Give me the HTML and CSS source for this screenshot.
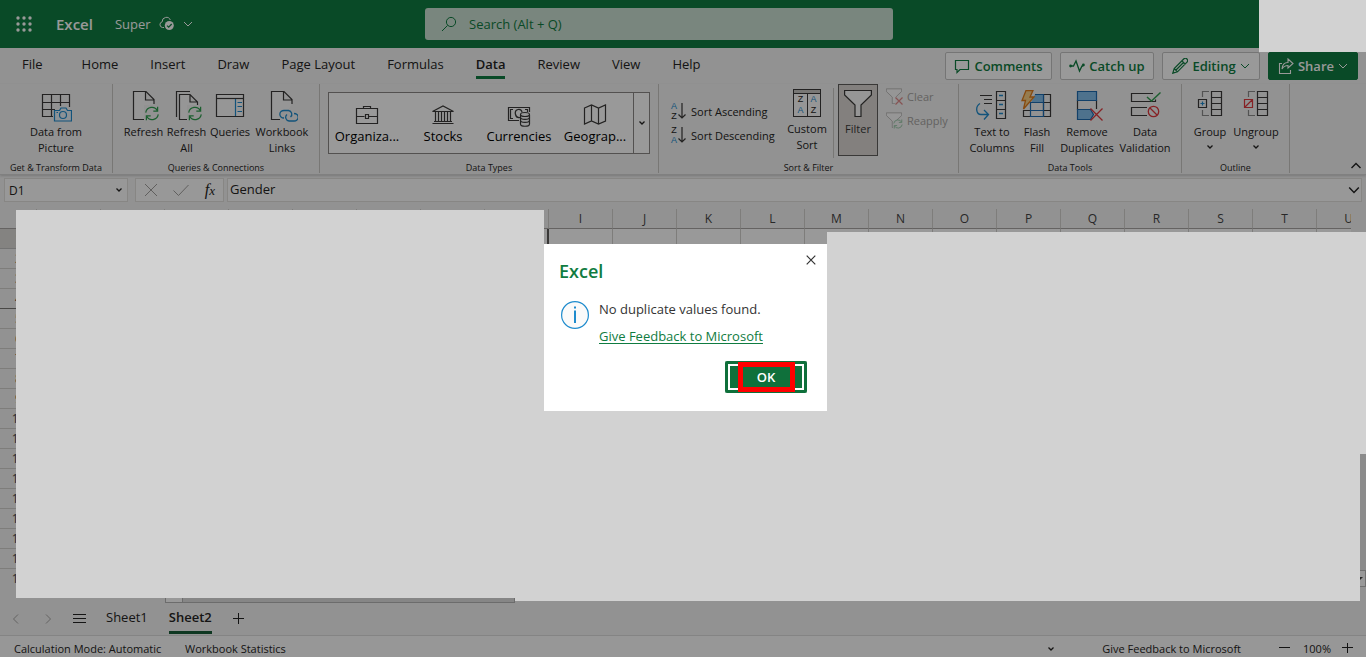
FILE: index.html
```html
<!DOCTYPE html>
<html lang="en">
<head>
<meta charset="utf-8">
<title>Super - Excel</title>
<link rel="stylesheet" href="styles.css">
</head>
<body>
<svg class="defs" aria-hidden="true">
  <symbol id="chev" viewBox="0 0 10 10"><path d="M1 3l4 4 4-4" fill="none" stroke="currentColor"/></symbol>
  <symbol id="chev-small" viewBox="0 0 10 10"><path d="M2.500 3.500l2.500 2.500 2.500-2.500" fill="none" stroke="currentColor" stroke-width="1.300"/></symbol>
  <symbol id="page" viewBox="0 0 32 32"><path d="M16 29.500H5.500v-28H18l8 8V14M17.500 1.500v8.500H26" fill="#fafafa" stroke="#3b3a39" stroke-width="1.200"/></symbol>
  <symbol id="cycle" viewBox="0 0 16 16"><path d="M1.300 7a6.700 6.700 0 0 1 12.500-2M14 .8v4.700H9.400M14.700 9a6.700 6.700 0 0 1-12.500 2M2 15.200v-4.700h4.600" fill="none" stroke="currentColor" stroke-width="1.300"/></symbol>
  <symbol id="funnel" viewBox="0 0 28 28"><path d="M.6 1.500h26.800v4.500L17 16v11.500h-6V16L.6 6z" fill="#fafafa" stroke="currentColor" stroke-width="1.200"/></symbol>
  <symbol id="arrow-down" viewBox="0 0 8 16"><path d="M4 0v15M.5 11.500L4 15l3.500-3.500" fill="none" stroke="#3b3a39" stroke-width="1.200"/></symbol>
</svg>

<div class="app">
  <header class="topbar">
    <div class="brand">
      <button class="plain waffle" aria-label="App launcher">
        <svg width="16" height="16" viewBox="0 0 16 16" fill="#fff"><circle cx="2" cy="2" r="1.700"/><circle cx="8" cy="2" r="1.700"/><circle cx="14" cy="2" r="1.700"/><circle cx="2" cy="8" r="1.700"/><circle cx="8" cy="8" r="1.700"/><circle cx="14" cy="8" r="1.700"/><circle cx="2" cy="14" r="1.700"/><circle cx="8" cy="14" r="1.700"/><circle cx="14" cy="14" r="1.700"/></svg>
      </button>
      <strong class="app-name">Excel</strong>
      <button class="plain doc-name">Super
        <svg width="16" height="16" viewBox="0 0 16 16"><path d="M5 11.500H3.500a2.900 2.900 0 0 1-.3-5.700A4.200 4.200 0 0 1 11.300 4" fill="none" stroke="#fff"/><circle cx="10.300" cy="9.500" r="4.500" fill="#fff"/><path d="M8 9.600l1.700 1.600 3-3.200" fill="none" stroke="#107c41" stroke-width="1.300"/></svg>
        <svg width="10" height="10"><use href="#chev"/></svg>
      </button>
    </div>
    <label class="search">
      <svg width="16" height="16" viewBox="0 0 16 16"><circle cx="10" cy="6" r="4.600" fill="none" stroke="currentColor"/><path d="M6.600 9.400L1 15" stroke="currentColor"/></svg>
      <input type="search" placeholder="Search (Alt + Q)" aria-label="Search">
    </label>
  </header>

  <div class="tabbar">
    <nav class="tabs">
      <button class="plain tab file">File</button>
      <button class="plain tab">Home</button>
      <button class="plain tab">Insert</button>
      <button class="plain tab">Draw</button>
      <button class="plain tab">Page Layout</button>
      <button class="plain tab">Formulas</button>
      <button class="plain tab active">Data</button>
      <button class="plain tab">Review</button>
      <button class="plain tab">View</button>
      <button class="plain tab">Help</button>
    </nav>
    <div class="actions">
      <button class="action comments"><svg width="16" height="16" viewBox="0 0 16 16"><path d="M1.500 2.500h13v9H6l-3 3v-3H1.500z" fill="none" stroke="currentColor" stroke-width="1.200"/></svg>Comments</button>
      <button class="action catchup"><svg width="16" height="16" viewBox="0 0 16 16"><path d="M2 8h2.500L7 3l3.500 10L13 8h1" fill="none" stroke="currentColor" stroke-width="1.300"/><circle cx="1.600" cy="8" r="1.400" fill="currentColor"/><circle cx="14.400" cy="7" r="1.400" fill="currentColor"/></svg>Catch up</button>
      <button class="action editing"><svg width="16" height="16" viewBox="0 0 16 16"><path d="M.8 15.200l1.400-4.700L11.700 1a1.800 1.800 0 0 1 3.300 3.200L5.500 13.800zM10 2.800l3.300 3.300M2.200 10.500l3.300 3.300M4 12l7.500-7.500" fill="none" stroke="currentColor" stroke-width="1.200"/></svg>Editing<svg width="10" height="10"><use href="#chev"/></svg></button>
      <button class="action share"><svg width="16" height="16" viewBox="0 0 16 16"><path d="M4 5.500H1.500v10h11V12M10 1l5 4.500L10 10V7.500C7 7.500 5.500 8.500 4 11c.3-4 2.500-6.500 6-6.500z" fill="none" stroke="currentColor" stroke-width="1.100"/></svg>Share<svg width="10" height="10"><use href="#chev"/></svg></button>
    </div>
  </div>

  <div class="ribbon">
    <section class="group g-transform">
      <div class="group-body centered">
        <button class="plain cmd w60"><svg width="32" height="32" viewBox="0 0 32 32"><path d="M13 26.500H2.500v-22h27V17M2.500 12.500h27M2.500 19.500H15M11.500 4.500v22M20.500 4.500V16" fill="none" stroke="#3b3a39" stroke-width="1.200"/><path d="M14.500 20.500h5l1.500-2.500h5l1.500 2.500h4v10.500h-17z" fill="#eaf3fa" stroke="#1e8bcd" stroke-width="1.200"/><circle cx="23" cy="25" r="3.500" fill="none" stroke="#1e8bcd" stroke-width="1.200"/><path d="M16.500 22.500h1.500" stroke="#1e8bcd"/></svg><span>Data from<br>Picture</span></button>
      </div>
      <h2>Get &amp; Transform Data</h2>
    </section>
    <section class="group g-queries">
      <div class="group-body">
        <button class="plain cmd w43"><svg width="32" height="32"><use href="#page" width="32" height="32"/><rect x="16" y="15" width="16" height="17" fill="#f3f3f3"/><use href="#cycle" x="16.500" y="16" width="15" height="15" class="ok-green"/></svg><span>Refresh</span></button>
        <button class="plain cmd w43"><svg width="32" height="32" viewBox="0 0 32 32"><path d="M5.500 27V1.500H19" fill="none" stroke="#3b3a39" stroke-width="1.200"/><path d="M16 29.500H8.500v-25H19l7.500 7.500V15M19 4.500V12h7.500" fill="#fafafa" stroke="#3b3a39" stroke-width="1.200"/><rect x="16" y="15" width="16" height="17" fill="#f3f3f3"/><use href="#cycle" x="16.500" y="16" width="15" height="15" class="ok-green"/></svg><span>Refresh<br>All</span></button>
        <button class="plain cmd w44"><svg width="32" height="32" viewBox="0 0 32 32"><path d="M2.500 4.500h27v22h-27z" fill="#fafafa" stroke="#3b3a39" stroke-width="1.200"/><path d="M2.500 8.500h27" stroke="#3b3a39" stroke-width="1.200"/><path d="M21.500 9v17M23.500 12.500H28M23.500 16.500H28M23.500 21.500H28" stroke="#1e8bcd" stroke-width="1.200"/></svg><span>Queries</span></button>
        <button class="plain cmd w60"><svg width="32" height="32" viewBox="0 0 32 32"><use href="#page" width="32" height="32"/><path d="M14 20h18v12H14z" fill="#f3f3f3"/><g fill="none" stroke="#1e8bcd" stroke-width="1.300"><path d="M18 28a4 3.600 0 0 1 0-7.500h4.500a3.700 3.700 0 0 1 2 6.500"/><path d="M28 23.500a4 3.600 0 0 1 0 7.500h-5a3.700 3.700 0 0 1-2-6.500"/></g></svg><span>Workbook<br>Links</span></button>
      </div>
      <h2>Queries &amp; Connections</h2>
    </section>
    <section class="group g-types">
      <div class="group-body">
        <div class="gallery">
          <button class="plain type"><svg width="24" height="24" viewBox="0 0 24 24" fill="none" stroke="#3b3a39" stroke-width="1.200"><path d="M1.500 5.500h21v15h-21zM8.500 5.500v-2h7v2M1.500 13.500h8M14 13.500h8.500M10.500 11.500h3v4h-3z"/></svg>Organiza...</button>
          <button class="plain type"><svg width="24" height="24" viewBox="0 0 24 24" fill="none" stroke="#3b3a39" stroke-width="1.200"><path d="M1.500 8.500L12 3l10.500 5.500zM1.500 20.500h21M3 18.500h18M4.500 9v9M7.500 9v9M10.500 9v9M13.500 9v9M16.500 9v9M19.500 9v9"/></svg>Stocks</button>
          <button class="plain type"><svg width="24" height="24" viewBox="0 0 24 24" fill="none" stroke="#3b3a39" stroke-width="1.200"><path d="M12 17.500H1.500v-13h21V9M6 6.500H3.500v9H6M18 6.500h2.500V9M13 14.500c-5 1-6.500-7-2-8 3-.5 4 1.500 4 3"/><path d="M13.500 12v9c0 3 9 3 9 0v-9" fill="#fff"/><ellipse cx="18" cy="11.500" rx="4.500" ry="2" fill="#fff"/><path d="M13.500 14.500c0 2.500 9 2.500 9 0M13.500 17.500c0 2.500 9 2.500 9 0"/></svg>Currencies</button>
          <button class="plain type"><svg width="24" height="24" viewBox="0 0 24 24" fill="none" stroke="#3b3a39" stroke-width="1.200"><path d="M1.500 5l7-3 7 3 7-3v16l-7 3-7-3-7 3zM8.500 2v16M15.500 5v16"/></svg>Geograp...</button>
          <button class="plain more" aria-label="More data types"><svg width="10" height="10"><use href="#chev-small"/></svg></button>
        </div>
      </div>
      <h2>Data Types</h2>
    </section>
    <section class="group g-sort">
      <div class="group-body">
        <div class="stack sorts">
          <button class="plain row-cmd"><span class="az"><b class="blue">A</b><b>Z</b></span><svg width="8" height="16"><use href="#arrow-down"/></svg>Sort Ascending</button>
          <button class="plain row-cmd"><span class="az"><b>Z</b><b class="blue">A</b></span><svg width="8" height="16"><use href="#arrow-down"/></svg>Sort Descending</button>
        </div>
        <button class="plain cmd tight w44"><span class="custom-icon"><i></i><b>Z</b><b class="blue">A</b><b class="blue">A</b><b>Z</b></span><span>Custom<br>Sort</span></button>
        <span class="rule"></span>
        <button class="plain cmd tight filter-on"><svg width="28" height="28"><use href="#funnel"/></svg><span>Filter</span></button>
        <div class="stack filters">
          <button class="plain row-cmd off" disabled><svg width="17" height="17"><use href="#funnel" width="16" height="16"/><path d="M9 9h8v8H9z" fill="#f3f3f3"/><path d="M9.500 9.500l7 7M16.500 9.500l-7 7" stroke="#e08a8a" stroke-width="1.200"/></svg>Clear</button>
          <button class="plain row-cmd off" disabled><svg width="17" height="17"><use href="#funnel" width="16" height="16"/><path d="M7 8h10v9H7z" fill="#f3f3f3"/><use href="#cycle" x="7" y="7" width="10" height="10" class="off-green"/></svg>Reapply</button>
        </div>
      </div>
      <h2>Sort &amp; Filter</h2>
    </section>
    <section class="group g-tools">
      <div class="group-body">
        <button class="plain cmd w48"><svg width="32" height="32" viewBox="0 0 32 32" fill="none" stroke="#3b3a39" stroke-width="1.200"><path d="M20.500 1.500h9v27h-9zM20.500 10.500h9M20.500 19.500h9M4 5.500h12M8 9.500h8M8 13.500h8"/><path d="M23 5.500h4M23 14.500h4M23 23.500h4M4 13.500c-5 3-4 11 1 11h7M8 20l4.500 4.500L8 29.500" stroke="#1e8bcd" stroke-width="1.300"/></svg><span>Text to<br>Columns</span></button>
        <button class="plain cmd w42"><svg width="32" height="32" viewBox="0 0 32 32"><path d="M2.500 20v6.500h27v-22H14M2.500 20.500h27M20 12.500h9.500M22.500 4.500v22" fill="none" stroke="#3b3a39" stroke-width="1.200"/><path d="M14 4.500h8.500v8H10" fill="#83beec" stroke="#1e6bb0" stroke-width="1.200"/><path d="M9.500 12.500h13v14h-13zM9.500 20.500h13" fill="none" stroke="#1e6bb0" stroke-width="1.200"/><path d="M5 .5h7L9 7h4L2.500 19l2-8.500H1z" fill="#fbcf84" stroke="#e07b1a" stroke-width="1.300"/></svg><span>Flash<br>Fill</span></button>
        <button class="plain cmd w58"><svg width="32" height="32" viewBox="0 0 32 32"><path d="M6.500 10v10M25.500 10v9" stroke="#3b3a39" stroke-width="1.200"/><path d="M6.500 1.500h19v9h-19zM6.500 19.500h13l3 5-3 5h-13z" fill="#83beec" stroke="#1e6bb0" stroke-width="1.200"/><path d="M19.500 18.500l12 12M31.500 18.500l-12 12" stroke="#e0393e" stroke-width="1.300"/></svg><span>Remove<br>Duplicates</span></button>
        <button class="plain cmd w58"><svg width="32" height="32" viewBox="0 0 32 32" fill="none" stroke="#3b3a39" stroke-width="1.200"><path d="M24 3.500H2.500v8h24v-2M18 17.500H2.500v8H18"/><path d="M18 7l4.500 4L31.500 2.500" stroke="#2f9e4f" stroke-width="1.400"/><g stroke="#e0393e" stroke-width="1.300"><circle cx="24.500" cy="21.500" r="5.200"/><path d="M21 18l7 7"/></g></svg><span>Data<br>Validation</span></button>
      </div>
      <h2>Data Tools</h2>
    </section>
    <section class="group g-outline">
      <div class="group-body">
        <button class="plain cmd w46"><svg width="32" height="32" viewBox="0 0 32 32" fill="none" stroke="#3b3a39" stroke-width="1.200"><path d="M17.500 1.500h10v24h-10zM17.500 7.500h10M17.500 13.500h10M17.500 19.500h10M4.500 9.500h8v8h-8z"/><path d="M8.500 7V1.500H15M8.500 20v5.500H15" stroke="#8a8a8a"/><path d="M6.500 13.500h4M8.500 11.500v4" stroke="#1e8bcd"/></svg><span>Group</span><svg width="10" height="10"><use href="#chev-small"/></svg></button>
        <button class="plain cmd w46"><svg width="32" height="32" viewBox="0 0 32 32" fill="none" stroke="#3b3a39" stroke-width="1.200"><path d="M17.500 1.500h10v24h-10zM17.500 7.500h10M17.500 13.500h10M17.500 19.500h10"/><path d="M8.500 7V1.500H15M8.500 20v5.500H15" stroke="#8a8a8a"/><path d="M4.500 9.500h8v8h-8zM4.500 17.500l8-8" stroke="#e0393e"/></svg><span>Ungroup</span><svg width="10" height="10"><use href="#chev-small"/></svg></button>
      </div>
      <h2>Outline</h2>
    </section>
    <button class="plain collapse" aria-label="Collapse ribbon"><svg width="10" height="10" viewBox="0 0 10 10"><path d="M.5 7L5 2.500 9.500 7" fill="none" stroke="#222" stroke-width="1.400"/></svg></button>
  </div>

  <div class="formula-bar">
    <div class="box name-box"><input type="text" value="D1" aria-label="Name box"><svg width="10" height="10"><use href="#chev-small"/></svg></div>
    <div class="box fx">
      <button class="plain faint" aria-label="Cancel"><svg width="14" height="14" viewBox="0 0 14 14"><path d="M1 1l12 12M13 1L1 13" stroke="currentColor"/></svg></button>
      <button class="plain faint" aria-label="Enter"><svg width="16" height="14" viewBox="0 0 16 14"><path d="M.5 7.500l5 5L15.500 2" fill="none" stroke="currentColor"/></svg></button>
      <button class="plain fn" aria-label="Insert function">f<small>x</small></button>
    </div>
    <div class="box formula"><input type="text" value="Gender" aria-label="Formula"><svg width="12" height="12" viewBox="0 0 10 10"><path d="M1 3l4 4 4-4" fill="none" stroke="#222" stroke-width="1.200"/></svg></div>
  </div>

  <main class="sheet">
    <div class="grid-wrap">
      <table class="cells">
        <thead><tr><th class="corner"></th><th>A</th><th>B</th><th>C</th><th>D</th><th>E</th><th>F</th><th>G</th><th>H</th><th>I</th><th>J</th><th>K</th><th>L</th><th>M</th><th>N</th><th>O</th><th>P</th><th>Q</th><th>R</th><th>S</th><th>T</th><th>U</th></tr></thead>
        <tbody>
          <tr class="current"><th>1</th><td></td><td></td><td></td><td></td><td></td><td></td><td></td><td class="edge"></td><td></td><td></td><td></td><td></td><td></td><td></td><td></td><td></td><td></td><td></td><td></td><td></td><td></td></tr>
          <tr><th>2</th><td colspan="21"></td></tr>
          <tr><th>3</th><td colspan="21"></td></tr>
          <tr class="frozen"><th>4</th><td colspan="21"></td></tr>
          <tr><th>5</th><td colspan="21"></td></tr>
          <tr><th>6</th><td colspan="21"></td></tr>
          <tr><th>7</th><td colspan="21"></td></tr>
          <tr><th>8</th><td colspan="21"></td></tr>
          <tr><th>9</th><td colspan="21"></td></tr>
          <tr><th>10</th><td colspan="21"></td></tr>
          <tr><th>11</th><td colspan="21"></td></tr>
          <tr><th>12</th><td colspan="21"></td></tr>
          <tr><th>13</th><td colspan="21"></td></tr>
          <tr><th>14</th><td colspan="21"></td></tr>
          <tr><th>15</th><td colspan="21"></td></tr>
          <tr><th>16</th><td colspan="21"></td></tr>
          <tr><th>17</th><td colspan="21"></td></tr>
          <tr class="last"><th>18</th><td colspan="21"></td></tr>
        </tbody>
      </table>
      <div class="vscroll"><span class="thumb"></span><button class="plain scroll-btn" aria-label="Scroll down"><svg width="10" height="8" viewBox="0 0 10 8"><path d="M1 2h8L5 6z" fill="#444"/></svg></button></div>
    </div>
    <div class="hscroll"><button class="plain" aria-label="Scroll left"></button><span></span></div>
  </main>

  <div class="sheet-tabs">
    <button class="plain nav-arrow" aria-label="Previous sheet"><svg width="8" height="10" viewBox="0 0 8 10"><path d="M6 .5L1.500 5 6 9.500" fill="none" stroke="currentColor"/></svg></button>
    <button class="plain nav-arrow" aria-label="Next sheet"><svg width="8" height="10" viewBox="0 0 8 10"><path d="M2 .5L6.500 5 2 9.500" fill="none" stroke="currentColor"/></svg></button>
    <button class="plain list" aria-label="All sheets"><svg width="13" height="10" viewBox="0 0 13 10"><path d="M0 .5h13M0 4.500h13M0 8.500h13" stroke="#222"/></svg></button>
    <button class="plain sheet-tab">Sheet1</button>
    <button class="plain sheet-tab selected">Sheet2</button>
    <button class="plain add" aria-label="New sheet"><svg width="11" height="11" viewBox="0 0 11 11"><path d="M0 5.500h11M5.500 0v11" stroke="#222"/></svg></button>
  </div>

  <footer class="status">
    <span class="calc">Calculation Mode: Automatic</span>
    <button class="plain stats">Workbook Statistics</button>
    <button class="plain status-more" aria-label="More"><svg width="10" height="10"><use href="#chev-small"/></svg></button>
    <button class="plain feedback">Give Feedback to Microsoft</button>
    <button class="plain" aria-label="Zoom out"><svg width="11" height="11" viewBox="0 0 11 11"><path d="M0 4.500h11" stroke="#222"/></svg></button>
    <span class="zoom">100%</span>
    <button class="plain" aria-label="Zoom in"><svg width="11" height="11" viewBox="0 0 11 11"><path d="M0 4.500h11M5.500 0v10" stroke="#222"/></svg></button>
  </footer>

  <div class="dim"></div>
  <div class="cover cover-account"></div>
  <div class="cover cover-left"></div>
  <div class="cover cover-right"></div>
  <div class="cover cover-bottom"></div>

  <div class="dialog" role="dialog" aria-labelledby="dlg-title">
    <div class="dialog-head">
      <h1 id="dlg-title">Excel</h1>
      <button class="plain close" aria-label="Close"><svg width="10" height="10" viewBox="0 0 10 10"><path d="M.7.7l8.600 8.600M9.300.7L.7 9.300" stroke="#333" stroke-width="1.200"/></svg></button>
    </div>
    <div class="dialog-body">
      <svg width="28" height="28" viewBox="0 0 28 28"><circle cx="14" cy="14" r="13.400" fill="#fafafa" stroke="#1e8bcd" stroke-width="1.200"/><path d="M14 9.500V22M14 5.500v2" stroke="#1e8bcd" stroke-width="2"/></svg>
      <div class="message">
        <p>No duplicate values found.</p>
        <a href="#">Give Feedback to Microsoft</a>
      </div>
    </div>
    <div class="dialog-foot"><button class="ok"><span>OK</span></button></div>
  </div>
</div>
</body>
</html>
```
FILE: styles.css
```css
* { box-sizing: border-box; }
body { margin: 0; font-family: "Open Sans", "Noto Sans", sans-serif; font-size: 13px; color: #252423; }
svg { flex: none; display: block; }
.defs { position: absolute; width: 0; height: 0; }
.plain { border: 0; background: none; padding: 0; margin: 0; font: inherit; color: inherit; }
.app { position: relative; min-height: 100vh; display: flex; flex-direction: column; background: #f3f3f3; overflow: hidden; }

.topbar { display: flex; align-items: center; height: 48px; background: #107c41; color: #fff; }
.brand { flex: 0 0 425px; display: flex; align-items: center; padding-left: 16px; }
.waffle { margin-right: 24px; }
.app-name { font-size: 15px; font-weight: 600; margin-right: 22px; }
.doc-name { display: flex; align-items: center; gap: 8px; }
.search { flex: 0 1 468px; height: 32px; display: flex; align-items: center; gap: 12px; padding: 0 16px; border-radius: 3px; background: #cadfd2; color: #107c41; }
.search input { flex: 1; border: 0; background: none; font: inherit; color: #107c41; outline: 0; padding: 0; }
.search input::placeholder { color: #107c41; opacity: 1; }

.tabbar { display: flex; justify-content: space-between; height: 36px; }
.tabs { display: flex; padding-left: 22px; gap: 32px; }
.tab { height: 31px; border-bottom: 3px solid transparent; white-space: nowrap; padding-top: 3px; }
.tab.file { margin-right: 7px; }
.tab.active { font-weight: 600; border-color: #107c41; }
.actions { display: flex; gap: 8px; padding: 4px 8px 0 0; }
.action { height: 28px; display: flex; align-items: center; justify-content: center; gap: 4px; padding: 0; background: #fff; border: 1px solid #c4c4c4; border-radius: 2px; color: #107c41; font: 600 13px "Open Sans", sans-serif; white-space: nowrap; }
.comments { min-width: 107px; }
.catchup { min-width: 94px; }
.editing { min-width: 98px; }
.share { min-width: 90px; background: #107c41; border-color: #107c41; color: #fff; }

.ribbon { position: relative; display: flex; height: 91px; border-bottom: 1px solid #d6d6d6; box-shadow: 0 1px 2px #ccc; }
.group { display: flex; flex-direction: column; flex: none; height: 89px; border-right: 1px solid #c8c6c4; }
.group-body { display: flex; height: 77px; }
.group-body.centered { justify-content: center; }
.group h2 { margin: 0; height: 12px; line-height: 14px; font-size: 9px; font-weight: 400; text-align: center; white-space: nowrap; }
.g-transform { width: 113px; }
.g-queries { width: 207px; }
.g-queries .group-body { padding-left: 9px; }
.g-types { width: 339px; }
.g-types .group-body { padding: 8px 8px 0; }
.g-sort { width: 300px; }
.g-sort .group-body { padding-left: 12px; }
.g-tools { width: 223px; }
.g-tools .group-body { padding-left: 9px; }
.g-outline { width: 108px; }
.g-outline .group-body { padding-left: 5px; }
.cmd { display: flex; flex-direction: column; align-items: center; gap: 2px; padding-top: 6px; height: 76px; font-size: 11px; line-height: 16px; white-space: nowrap; text-align: center; }
.cmd.tight { padding-top: 5px; gap: 4px; }
.w42 { width: 42px; } .w43 { width: 43px; } .w44 { width: 44px; } .w46 { width: 46px; }
.w48 { width: 48px; } .w58 { width: 58px; } .w60 { width: 60px; }
.ok-green { color: #2f9e4f; }
.off-green { color: #8fc4a0; }
.blue { color: #1e8bcd; }
.gallery { display: flex; width: 322px; height: 62px; background: #fff; border: 1px solid #8a8886; }
.type { width: 76px; display: flex; flex-direction: column; align-items: center; padding-top: 10px; font-size: 13px; line-height: 18px; color: #000; }
.more { flex: 1; display: flex; align-items: center; justify-content: center; border-left: 1px solid #8a8886; }
.stack { display: flex; flex-direction: column; align-items: flex-start; }
.row-cmd { display: flex; align-items: center; gap: 4px; height: 24px; font-size: 11px; white-space: nowrap; }
.sorts { width: 114px; padding-top: 15px; }
.sorts .row-cmd { gap: 5px; }
.sorts .row-cmd svg { margin-left: -4px; }
.az { display: flex; flex-direction: column; font: 9px/10px "Liberation Sans", sans-serif; }
.az b, .custom-icon b { font-weight: 400; }
.custom-icon { display: grid; grid-template: 4px 11px 11px / 13px 13px; width: 28px; height: 28px; border: 1px solid #3b3a39; background: linear-gradient(#3b3a39, #3b3a39) 13px 4px / 1px 22px no-repeat #fafafa; font: 9px/11px "Liberation Sans", sans-serif; }
.custom-icon i { grid-column: 1 / 3; height: 4px; background: #c8c6c4; border-bottom: 1px solid #3b3a39; }
.rule { width: 1px; height: 70px; margin: 4px 4px 0; background: #c8c6c4; }
.filter-on { width: 40px; height: 72px; border: 1px solid #605e5c; background: #dad6d2; color: #3b3a39; }
.cmd.filter-on { padding-top: 4px; }
.filters { margin-left: 8px; }
.off { color: #a6a4a2; }
.collapse { position: absolute; right: 5px; bottom: 3px; }

.formula-bar { display: flex; padding: 3px 4px 0; height: 27px; }
.box { display: flex; align-items: center; height: 24px; background: #fdfdfd; border: 1px solid #e1dfdd; }
.box input { flex: 1; min-width: 0; border: 0; background: none; padding: 0; font: inherit; color: inherit; outline: 0; }
.name-box { width: 124px; padding: 0 3px 0 4px; margin-right: 7px; }
.name-box input { font-size: 12px; }
.fx { width: 89px; padding: 0 8px; justify-content: space-between; margin-right: 3px; }
.faint { color: #a19f9d; }
.fn { font: italic 400 16px/16px "Liberation Serif", serif; }
.fn small { font-size: 13px; }
.formula { flex: 1; padding: 0 1px 0 2px; }
.formula input { padding-bottom: 2px; }

.sheet { flex: 1; display: flex; flex-direction: column; padding-top: 7px; min-height: 0; }
.grid-wrap { flex: 1; display: flex; overflow: hidden; }
.cells { flex: 1; min-width: 0; width: 0; display: block; overflow: hidden; border-collapse: separate; border-spacing: 0; font-size: 12px; }
.cells th { height: 20px; padding: 0; line-height: 19px; font-weight: 400; color: #444; border-bottom: 1px solid #d2d0ce; text-align: center; }
.cells thead th { min-width: 64px; border-right: 1px solid #d2d0ce; border-bottom-color: #a8a6a4; }
.cells thead th.corner { min-width: 37px; width: 37px; }
.cells td { padding: 0; height: 20px; background: #fff; border-right: 1px solid #d2d0ce; border-bottom: 1px solid #e1dfdd; }
.cells td.edge { border-right: 2px solid #605e5c; }
.cells .current th { background: #dcdad8; border-color: #c0c0c0; }
.cells .frozen th { border-color: #7a7876; }
.cells .last th { border-color: transparent; }
.vscroll { width: 15px; display: flex; flex-direction: column; }
.thumb { flex: 1; margin-top: 60px; background: #e8e8e8; }
.scroll-btn { height: 17px; border: 1px solid #bbb; background: #fff; display: flex; align-items: center; justify-content: center; margin-bottom: 2px; }
.hscroll { display: flex; height: 14px; margin-left: 165px; width: 350px; border: 1px solid #b4b4b4; }
.hscroll button { width: 17px; border-right: 1px solid #b4b4b4; background: #fff; }
.hscroll span { flex: 1; background: #e0e0e0; }

.sheet-tabs { display: flex; align-items: center; height: 32px; padding: 0 0 1px 12px; }
.nav-arrow { color: #a6a4a2; width: 32px; }
.list { margin-left: -3px; width: 33px; }
.sheet-tab { height: 31px; border-bottom: 3px solid transparent; margin-right: 21px; }
.sheet-tab.selected { font-weight: 600; border-color: #185c37; }

.status { display: flex; align-items: center; height: 24px; padding: 2px 13px 0 14px; border-top: 1px solid #dcdcdc; background: #fcfcfc; font-size: 11px; white-space: nowrap; }
.calc { min-width: 171px; }
.status-more { margin-left: auto; }
.feedback { margin: 0 38px 0 46px; }
.zoom { margin: 0 11px 0 13px; }

.dim { position: absolute; inset: 0; background: rgba(0, 0, 0, .4); }
.cover { position: absolute; background: #d2d2d2; }
.cover-account { top: 0; right: 0; width: 107px; height: 52px; }
.cover-left { top: 210px; left: 16px; width: 528px; height: 388px; }
.cover-right { top: 232px; left: 827px; right: 0; height: 222px; }
.cover-bottom { top: 411px; left: 515px; right: 6px; height: 190px; }

.dialog { position: absolute; top: 244px; left: 544px; width: 283px; padding: 9px 10px 18px 15px; background: #fff; }
.dialog-head { display: flex; justify-content: space-between; align-items: flex-start; }
.dialog h1 { margin: 6px 0 0; font-size: 18px; line-height: 24px; font-weight: 600; color: #107c41; }
.close { padding: 2px 1px; }
.dialog-body { display: flex; gap: 10px; padding: 16px 0 0 2px; }
.dialog-body svg { margin-top: 2px; }
.message p { margin: 0; line-height: 20px; color: #333; }
.message a { display: block; margin-top: 7px; line-height: 20px; color: #107c41; text-underline-offset: 2px; }
.dialog-foot { display: flex; justify-content: flex-end; padding: 15px 10px 0 0; }
.ok { width: 82px; height: 32px; padding: 0; display: flex; justify-content: center; align-items: center; border: 0; border-radius: 2px; background: #0f703b; box-shadow: inset 0 0 0 3px #0f703b, inset 0 0 0 5px #fff; color: #fff; font: 600 13px "Open Sans", sans-serif; }
.ok span { width: 57px; height: 30px; display: flex; align-items: center; justify-content: center; border: 5px solid #f00; background: #0f703b; }
```
